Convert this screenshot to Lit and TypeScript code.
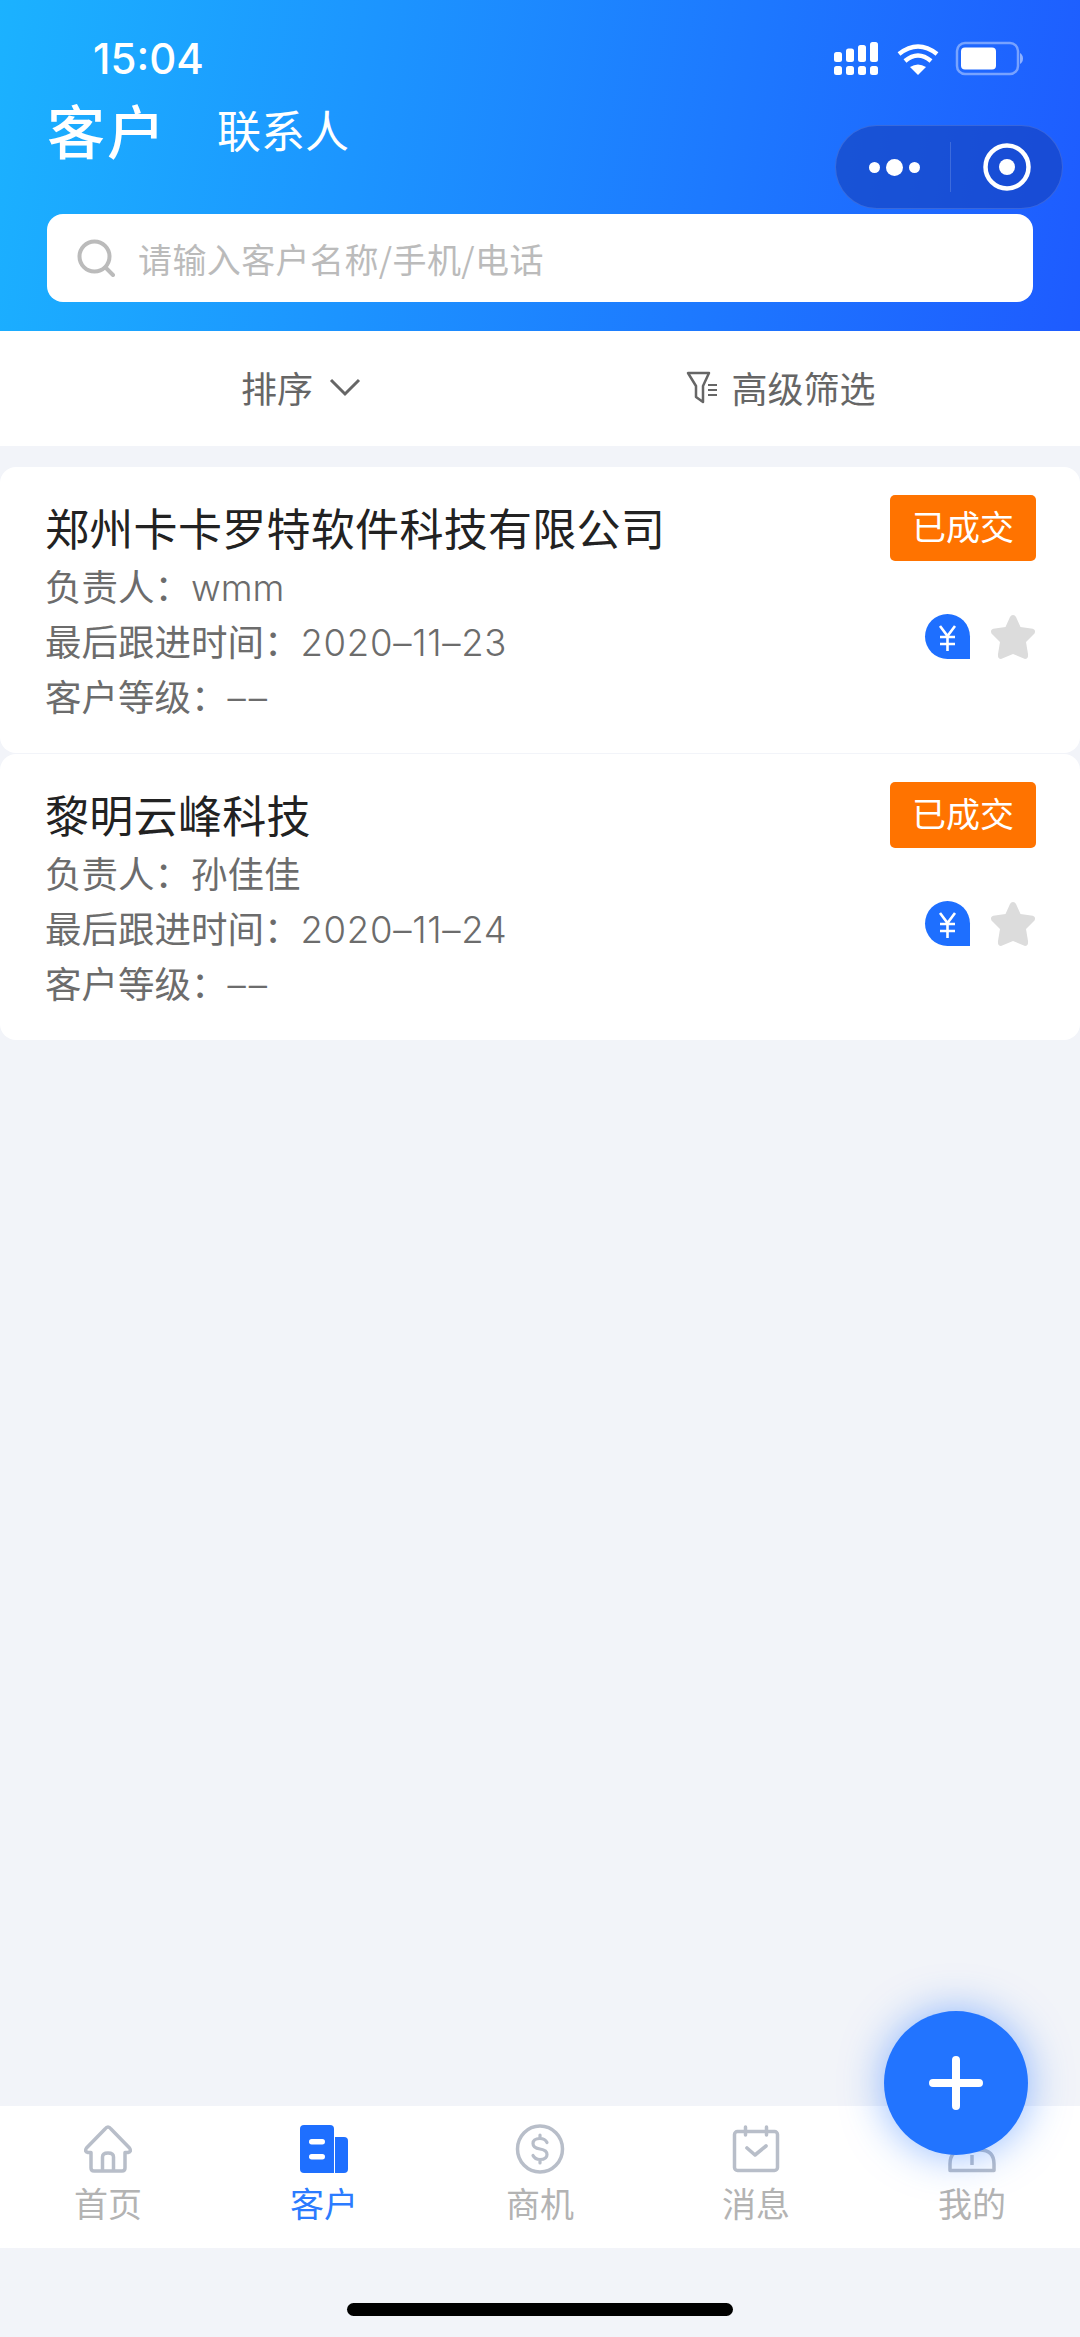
import { LitElement, html, css, svg } from "lit";
import { customElement } from "lit/decorators.js";

const customers = [
  { name: "郑州卡卡罗特软件科技有限公司", owner: "wmm", date: "2020-11-23" },
  { name: "黎明云峰科技", owner: "孙佳佳", date: "2020-11-24" },
];

const G = "#b8bec9";
const tabs = [
  {
    label: "首页",
    active: false,
    icon: svg`<path d="M25 3 Q23.500 3 22 5 L3.500 24 Q1 27.500 5 28.500 L8 28.500 V44 Q8 47 11 47 H39 Q42 47 42 44 V28.500 L45 28.500 Q49 27.500 46.500 24 L28 5 Q26.500 3 25 3 Z M19.500 46 V33 Q19.500 29 25 29 Q30.500 29 30.500 33 V46" fill="none" stroke="${G}" stroke-width="3.500" stroke-linejoin="round"/>`,
  },
  {
    label: "客户",
    active: true,
    icon: svg`<path d="M1 5 Q1 1 5 1 H31 Q35 1 35 5 V49 H5 Q1 49 1 45 Z" fill="#1e6fff"/><path d="M36 13 H45 Q49 13 49 17 V45 Q49 49 45 49 H36 Z" fill="#1e6fff"/><rect x="10" y="15" width="16" height="5.500" rx="2.700" fill="#fff"/><rect x="10" y="30" width="16" height="5.500" rx="2.700" fill="#fff"/>`,
  },
  {
    label: "商机",
    active: false,
    icon: svg`<ellipse cx="25" cy="25" rx="22.500" ry="23" fill="none" stroke="${G}" stroke-width="3.500"/><path d="M32 18.500 Q30 14.500 25 14.500 Q18 14.500 18 19.500 Q18 24 25 25 Q32 26 32 30.500 Q32 35.500 25 35.500 Q20 35.500 18 31.500 M25 11 V14.500 M25 35.500 V39" fill="none" stroke="${G}" stroke-width="3.200" stroke-linecap="round"/>`,
  },
  {
    label: "消息",
    active: false,
    icon: svg`<rect x="3.500" y="7.500" width="43" height="39" rx="3" fill="none" stroke="${G}" stroke-width="3.500"/><path d="M14.500 3 V11 M35.500 3 V11" stroke="${G}" stroke-width="3.500" stroke-linecap="round"/><path d="M16 24 L24 31 L35 22" fill="none" stroke="${G}" stroke-width="3.600" stroke-linecap="round" stroke-linejoin="round"/>`,
  },
  {
    label: "我的",
    active: false,
    icon: svg`<path d="M3 46.500 V40 Q3 26 17 26 H33 Q47 26 47 40 V46.500 Z" fill="none" stroke="${G}" stroke-width="3.500" stroke-linejoin="round"/><path d="M25 31 V41" stroke="${G}" stroke-width="3.500"/>`,
  },
];

@customElement("app-root")
export class AppRoot extends LitElement {
  static styles = css`
    :host {
      display: block;
      width: 1080px;
      height: 2337px;
      background: #f2f4f9;
      position: relative;
      overflow: hidden;
      font-family: "Noto Sans CJK SC", Inter, "Liberation Sans", sans-serif;
    }
    * { box-sizing: border-box; }
    .header {
      height: 331px;
      background: linear-gradient(100deg, #1bb2ff 0%, #1e5bff 100%);
      color: #fff;
      display: flex;
      flex-direction: column;
    }
    .status {
      height: 87px;
      padding: 0 56px 0 93px;
      display: flex;
      align-items: flex-start;
      justify-content: space-between;
    }
    .time {
      font: 500 42px/1 Inter, "Liberation Sans", sans-serif;
      margin-top: 38px;
    }
    .status-icons { margin-top: 41px; display: block; }
    .title-row {
      display: flex;
      align-items: flex-start;
      justify-content: space-between;
      padding: 0 17px 0 47px;
      height: 127px;
    }
    .tabs-top { display: flex; align-items: center; gap: 54px; }
    .t1 { font-size: 58px; letter-spacing: 2px; line-height: 84px; font-weight: 500; width: 116px; white-space: nowrap; }
    .t2 { font-size: 44px; line-height: 84px; }
    .capsule {
      width: 228px;
      height: 84px;
      margin-top: 38px;
      border-radius: 42px;
      background: rgba(20, 60, 180, 0.55);
      border: 1px solid rgba(255, 255, 255, 0.14);
      display: flex;
      align-items: center;
    }
    .cap-l {
      width: 115px;
      height: 50px;
      display: flex;
      align-items: center;
      justify-content: flex-end;
      border-right: 1px solid rgba(255, 255, 255, 0.16);
    }
    .dots { display: flex; align-items: center; gap: 6px; margin-right: 30px; }
    .dots i { display: block; width: 11px; height: 11px; border-radius: 50%; background: #fff; }
    .dots i.big { width: 17px; height: 17px; }
    .cap-r { flex: 1; display: flex; justify-content: center; }
    .cap-r svg { display: block; }
    .search {
      margin: 0 47px 0 47px;
      height: 88px;
      background: #fff;
      border-radius: 16px;
      display: flex;
      align-items: center;
      padding-left: 30px;
      gap: 23px;
      color: #bbb;
      font-size: 34px;
      letter-spacing: 0.4px;
    }
    .filter {
      height: 115px;
      background: #fff;
      display: flex;
      align-items: center;
      color: #666;
      font-size: 36px;
    }
    .filter > div { width: 540px; display: flex; align-items: center; justify-content: center; margin-top: -3px; }
    .f1 { padding-left: 62px; gap: 16px; }
    .f2 { padding-right: 58px; gap: 13px; }
    .list { padding-top: 21px; display: flex; flex-direction: column; gap: 1px; }
    .card {
      height: 286px;
      background: #fff;
      border-radius: 16px;
      padding: 27px 44px 0 45px;
      display: flex;
      justify-content: space-between;
    }
    .name { font-size: 44px; line-height: 66px; color: #222; letter-spacing: 0.3px; }
    .line { font-size: 36.5px; line-height: 55px; color: #6c6c6c; height: 55px; }
    .line.first { height: 55px; margin-top: -2px; }
    .val { font-family: Inter, "Liberation Sans", sans-serif; font-weight: 300; letter-spacing: 0.7px; }
    .val.cjk { font-family: "Noto Sans CJK SC", sans-serif; font-weight: 400; letter-spacing: 0; }
    .val.owner { letter-spacing: 0; }
    .val.none { letter-spacing: 3px; }
    .right { display: flex; flex-direction: column; align-items: flex-end; padding-top: 1px; }
    .badge {
      width: 146px;
      height: 66px;
      background: #ff7300;
      border-radius: 5px;
      color: #fff;
      font-size: 34px;
      line-height: 62px;
      text-align: center;
    }
    .marks { display: flex; align-items: center; gap: 20px; margin-top: 53px; }
    .yuan {
      background: #1e6fff;
      border-radius: 50% 50% 0 50%;
      display: block;
    }
    .tabbar {
      position: absolute;
      left: 0;
      right: 0;
      top: 2106px;
      height: 142px;
      background: #fff;
      display: flex;
    }
    .tab {
      width: 216px;
      display: flex;
      flex-direction: column;
      align-items: center;
      padding-top: 18px;
      color: #b3b3b3;
      font-size: 34px;
      line-height: 44px;
    }
    .tab svg { display: block; margin-bottom: 7px; }
    .tab.active { color: #2b7bff; }
    .fab {
      position: absolute;
      left: 884px;
      top: 2011px;
      width: 144px;
      height: 144px;
      border-radius: 50%;
      background: #2274ff;
      box-shadow: 0 0 42px rgba(34, 116, 255, 0.5);
      display: flex;
      align-items: center;
      justify-content: center;
    }
    .home {
      position: absolute;
      left: 347px;
      top: 2303px;
      width: 386px;
      height: 13px;
      border-radius: 7px;
      background: #000;
    }
  `;

  private statusIcons() {
    return html`<svg class="status-icons" width="190" height="36" viewBox="0 0 190 36">
      <g fill="#fff">
        <rect x="0" y="11" width="8" height="10" rx="2.500"/><rect x="12" y="7.500" width="8" height="13.500" rx="2.500"/><rect x="24" y="4" width="8" height="17" rx="2.500"/><rect x="36" y="1" width="8" height="20" rx="2.500"/>
        <rect x="0" y="25" width="8" height="9" rx="2.500"/><rect x="12" y="25" width="8" height="9" rx="2.500"/><rect x="24" y="25" width="8" height="9" rx="2.500"/><rect x="36" y="25" width="8" height="9" rx="2.500"/>
        <path d="M84 34 L76 26 Q84 21 92 26 Z"/>
      </g>
      <path d="M65 13 Q84 -2 103 13 M71 20 Q84 9 97 20" fill="none" stroke="#fff" stroke-width="4.500"/>
      <rect x="123" y="2" width="61" height="31" rx="8" fill="none" stroke="rgba(255,255,255,0.4)" stroke-width="2.500"/>
      <rect x="127" y="6.500" width="35" height="22" rx="4" fill="#fff"/>
      <path d="M186 12 Q189 14 189 17.500 Q189 21 186 23 Z" fill="rgba(255,255,255,0.5)"/>
    </svg>`;
  }

  private card(c: { name: string; owner: string; date: string }) {
    const latin = /^[a-z]+$/i.test(c.owner);
    return html`<div class="card">
      <div>
        <div class="name">${c.name}</div>
        <div class="line first">负责人：<span class="val owner ${latin ? "" : "cjk"}">${c.owner}</span></div>
        <div class="line">最后跟进时间：<span class="val">${c.date.replace(/-/g, "–")}</span></div>
        <div class="line">客户等级：<span class="val none">––</span></div>
      </div>
      <div class="right">
        <div class="badge">已成交</div>
        <div class="marks">
          <svg class="yuan" width="45" height="45" viewBox="0 0 45 45">
            <path d="M15 12 L22.500 22 L30 12 M15 23 H30 M15 30 H30 M22.500 22 V37" fill="none" stroke="#fff" stroke-width="2.600"/>
          </svg>
          <svg width="46" height="45" viewBox="0 0 46 45">
            <path d="M23 1 Q25 1 26 3 L30.500 13 L41 14.500 Q45.500 15 45 18 Q45 19.500 43 21 L36 28 L38 40 Q38.500 45 35 45 L23 40 L11 45 Q7.500 45 8 40 L10 28 L3 21 Q1 19.500 1 18 Q0.500 15 5 14.500 L15.500 13 L20 3 Q21 1 23 1 Z" fill="#dcdcdc"/>
          </svg>
        </div>
      </div>
    </div>`;
  }

  render() {
    return html`
      <div class="header">
        <div class="status">
          <div class="time">15:04</div>
          ${this.statusIcons()}
        </div>
        <div class="title-row">
          <div class="tabs-top"><div class="t1">客户</div><div class="t2">联系人</div></div>
          <div class="capsule">
            <div class="cap-l"><div class="dots"><i></i><i class="big"></i><i></i></div></div>
            <div class="cap-r">
              <svg width="48" height="48" viewBox="0 0 48 48">
                <circle cx="24" cy="24" r="21.500" fill="none" stroke="#fff" stroke-width="4.500"/>
                <circle cx="24" cy="24" r="8" fill="#fff"/>
              </svg>
            </div>
          </div>
        </div>
        <div class="search">
          <svg width="38" height="38" viewBox="0 0 38 38">
            <circle cx="17.500" cy="17.500" r="15" fill="none" stroke="#bbb" stroke-width="4"/>
            <path d="M29 29 L36 36" stroke="#bbb" stroke-width="4" stroke-linecap="round"/>
          </svg>
          <span>请输入客户名称/手机/电话</span>
        </div>
      </div>
      <div class="filter">
        <div class="f1">
          <span>排序</span>
          <svg width="32" height="20" viewBox="0 0 32 20"><path d="M2 3 L16 17 L30 3" fill="none" stroke="#666" stroke-width="3"/></svg>
        </div>
        <div class="f2">
          <svg width="32" height="34" viewBox="0 0 32 34">
            <path d="M2 3 H23 L17 16 V32 L10 27 V16 Z" fill="none" stroke="#666" stroke-width="2.500" stroke-linejoin="round"/>
            <path d="M22 15 H31 M22 20 H31 M22 25 H31" stroke="#666" stroke-width="2"/>
          </svg>
          <span>高级筛选</span>
        </div>
      </div>
      <div class="list">${customers.map((c) => this.card(c))}</div>
      <div class="tabbar">
        ${tabs.map(
          (t) => html`<div class="tab ${t.active ? "active" : ""}">
            <svg width="50" height="50" viewBox="0 0 50 50">${t.icon}</svg>
            <span>${t.label}</span>
          </div>`
        )}
      </div>
      <div class="fab">
        <svg width="54" height="54" viewBox="0 0 54 54"><path d="M27 4 V50 M4 27 H50" stroke="#fff" stroke-width="8" stroke-linecap="round"/></svg>
      </div>
      <div class="home"></div>
    `;
  }
}
